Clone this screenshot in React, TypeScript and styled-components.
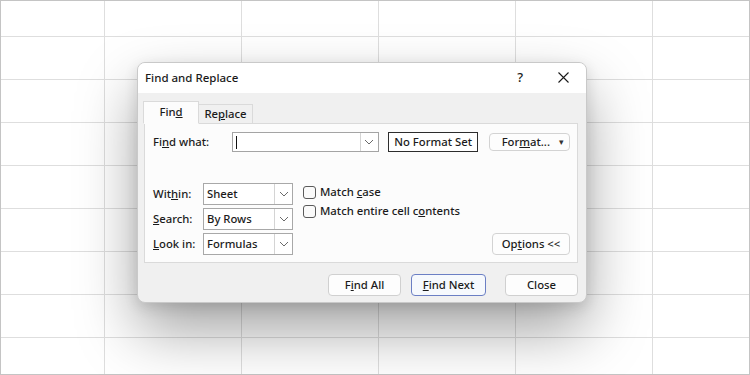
import React from 'react';
import styled, { createGlobalStyle } from 'styled-components';

const GlobalStyle = createGlobalStyle`
  html, body {
    margin: 0;
    padding: 0;
    width: 750px;
    height: 375px;
    overflow: hidden;
    background: #ffffff;
  }
  * {
    box-sizing: border-box;
  }
`;

const Chevron: React.FC = () => (
  <svg width="10" height="6" viewBox="0 0 10 6">
    <path d="M1 1 L5 5 L9 1" fill="none" stroke="#6a6a6a" strokeWidth="1" />
  </svg>
);

const CloseGlyph: React.FC = () => (
  <svg width="11" height="11" viewBox="0 0 11 11">
    <path d="M0.5 0.5 L10.5 10.5 M10.5 0.5 L0.5 10.5" stroke="#1a1a1a" strokeWidth="1.1" />
  </svg>
);

const SELECTS = [
  { label: <>Wit<u>h</u>in:</>, value: 'Sheet' },
  { label: <><u>S</u>earch:</>, value: 'By Rows' },
  { label: <><u>L</u>ook in:</>, value: 'Formulas' },
];

const CHECKS = [
  <>Match <u>c</u>ase</>,
  <>Match entire cell c<u>o</u>ntents</>,
];

const App: React.FC = () => {
  const cells = Array.from({ length: 9 * 6 });

  return (
    <Page>
      <GlobalStyle />
      <Sheet>
        {cells.map((_, i) => (
          <Cell key={i} />
        ))}
      </Sheet>

      <Dialog>
        <TitleBar>
          <Title>Find and Replace</Title>
          <TitleActions>
            <Help>?</Help>
            <CloseGlyph />
          </TitleActions>
        </TitleBar>

        <Body>
          <Tabs>
            <Tab $active>Fin<u>d</u></Tab>
            <Tab>Re<u>p</u>lace</Tab>
          </Tabs>

          <Panel>
            <FindRow>
              <FindLabel>Fi<u>n</u>d what:</FindLabel>
              <Combo>
                <ComboText>
                  <Caret />
                </ComboText>
                <ArrowBox>
                  <Chevron />
                </ArrowBox>
              </Combo>
              <FormatBox>No Format Set</FormatBox>
              <FormatButton>
                <span>For<u>m</u>at...</span>
                <Tri>▾</Tri>
              </FormatButton>
            </FindRow>

            <Options>
              <SelectCol>
                {SELECTS.map((s, i) => (
                  <SelectRow key={i}>
                    <SelectLabel>{s.label}</SelectLabel>
                    <Select>
                      <SelectValue>{s.value}</SelectValue>
                      <ArrowBox>
                        <Chevron />
                      </ArrowBox>
                    </Select>
                  </SelectRow>
                ))}
              </SelectCol>

              <CheckCol>
                {CHECKS.map((c, i) => (
                  <CheckRow key={i}>
                    <Box />
                    <CheckText>{c}</CheckText>
                  </CheckRow>
                ))}
              </CheckCol>

              <OptionsButton>
                Op<u>t</u>ions &lt;&lt;
              </OptionsButton>
            </Options>
          </Panel>

          <Footer>
            <Button>F<u>i</u>nd All</Button>
            <Button $primary><u>F</u>ind Next</Button>
            <Button $gap>Close</Button>
          </Footer>
        </Body>
      </Dialog>
    </Page>
  );
};

export default App;

const Page = styled.div`
  position: relative;
  width: 750px;
  height: 375px;
  overflow: hidden;
  font-family: "Noto Sans", "Open Sans", sans-serif;
  font-size: 11.3px;
  font-weight: 500;
  color: #1b1b1b;
`;

const Sheet = styled.div`
  width: 750px;
  height: 375px;
  display: grid;
  grid-template-columns: 104px repeat(4, 137px) 1fr;
  grid-template-rows: 36px repeat(7, 43px) 1fr;
  border: 1px solid #c4c4c4;
  background: #ffffff;
`;

const Cell = styled.div`
  border-right: 1px solid #dedede;
  border-bottom: 1px solid #dedede;
  &:nth-child(6n) {
    border-right: none;
  }
  &:nth-last-child(-n + 6) {
    border-bottom: none;
  }
`;

const Dialog = styled.div`
  position: absolute;
  left: 137px;
  top: 62px;
  width: 450px;
  height: 241px;
  border: 1px solid #c9c9c9;
  border-radius: 8px;
  overflow: hidden;
  background: #f0f0f0;
  display: flex;
  flex-direction: column;
  box-shadow: 0 28px 60px rgba(0, 0, 0, 0.36), 0 4px 14px rgba(0, 0, 0, 0.12);
`;

const TitleBar = styled.div`
  height: 30px;
  flex: none;
  background: #ffffff;
  display: flex;
  align-items: center;
  justify-content: space-between;
  padding: 0 17px 2px 7px;
`;

const Title = styled.div`
  font-size: 11.5px;
  color: #1a1a1a;
`;

const TitleActions = styled.div`
  display: flex;
  align-items: center;
  gap: 35px;
`;

const Help = styled.span`
  font-size: 13px;
  color: #1a1a1a;
`;

const Body = styled.div`
  flex: 1;
  display: flex;
  flex-direction: column;
  padding: 8px 8px 0 5px;
`;

const Tabs = styled.div`
  display: flex;
  align-items: flex-end;
  height: 23px;
  margin-bottom: -1px;
  position: relative;
  z-index: 1;
`;

const Tab = styled.div<{ $active?: boolean }>`
  height: ${(p) => (p.$active ? '23px' : '20px')};
  width: ${(p) => (p.$active ? '56px' : '54px')};
  display: flex;
  align-items: center;
  justify-content: center;
  padding-bottom: 2px;
  background: ${(p) => (p.$active ? '#fcfcfc' : '#f0f0f0')};
  border: 1px solid #dadada;
  border-bottom: ${(p) => (p.$active ? '1px solid #fcfcfc' : '1px solid #dadada')};
  border-left: ${(p) => (p.$active ? '1px solid #dadada' : 'none')};
`;

const Panel = styled.div`
  margin-left: 1px;
  height: 140px;
  background: #fcfcfc;
  border: 1px solid #dadada;
  padding: 8px 7px 7px 8px;
  display: flex;
  flex-direction: column;
  justify-content: space-between;
`;

const FindRow = styled.div`
  display: flex;
  align-items: center;
`;

const FindLabel = styled.div`
  width: 79px;
  padding-bottom: 2px;
`;

const Combo = styled.div`
  width: 148px;
  height: 20px;
  display: flex;
  border: 1px solid #a4a4a4;
  background: #ffffff;
`;

const ComboText = styled.div`
  flex: 1;
  display: flex;
  align-items: center;
  padding-left: 3px;
`;

const Caret = styled.div`
  width: 1px;
  height: 13px;
  background: #111111;
`;

const ArrowBox = styled.div`
  width: 18px;
  display: flex;
  align-items: center;
  justify-content: center;
  border-left: 1px solid #d4d4d4;
`;

const FormatBox = styled.div`
  margin-left: 9px;
  width: 91px;
  height: 20px;
  padding-bottom: 2px;
  border: 1px solid #2d2d2d;
  display: flex;
  align-items: center;
  justify-content: center;
  background: #ffffff;
`;

const FormatButton = styled.div`
  margin-left: 11px;
  width: 81px;
  height: 18px;
  border: 1px solid #d3d3d3;
  border-radius: 4px;
  background: #fdfdfd;
  display: flex;
  align-items: center;
  justify-content: flex-end;
  gap: 9px;
  padding: 0 5px 2px 0;
`;

const Tri = styled.span`
  font-size: 9px;
  color: #333;
`;

const Options = styled.div`
  display: flex;
  align-items: flex-start;
`;

const SelectCol = styled.div`
  display: flex;
  flex-direction: column;
  gap: 3px;
`;

const SelectRow = styled.div`
  display: flex;
  align-items: center;
`;

const SelectLabel = styled.div`
  width: 50px;
  padding-bottom: 2px;
`;

const Select = styled.div`
  width: 90px;
  height: 22px;
  display: flex;
  border: 1px solid #a8a8a8;
  background: #ffffff;
`;

const SelectValue = styled.div`
  flex: 1;
  display: flex;
  align-items: center;
  padding: 0 0 2px 3px;
`;

const CheckCol = styled.div`
  margin-left: 10px;
  margin-top: 2px;
  display: flex;
  flex-direction: column;
  gap: 5px;
`;

const CheckRow = styled.div`
  display: flex;
  align-items: center;
  gap: 4px;
  height: 14px;
`;

const CheckText = styled.span`
  margin-top: -2px;
`;

const Box = styled.div`
  width: 13px;
  height: 13px;
  border: 1px solid #5a5a5a;
  border-radius: 3px;
  background: #fafafa;
`;

const OptionsButton = styled.div`
  margin-left: auto;
  align-self: flex-end;
  width: 78px;
  height: 22px;
  padding-bottom: 2px;
  border: 1px solid #d3d3d3;
  border-radius: 4px;
  background: #fdfdfd;
  display: flex;
  align-items: center;
  justify-content: center;
`;

const Footer = styled.div`
  display: flex;
  justify-content: flex-end;
  gap: 10px;
  margin-top: 11px;
`;

const Button = styled.div<{ $primary?: boolean; $gap?: boolean }>`
  width: ${(p) => (p.$primary ? '75px' : '73px')};
  height: 22px;
  padding-bottom: 2px;
  margin-left: ${(p) => (p.$gap ? '9px' : '0')};
  border: 1px solid ${(p) => (p.$primary ? '#6b7fc4' : '#d0d0d0')};
  border-radius: 4px;
  background: ${(p) => (p.$primary ? '#f6f9fd' : '#fdfdfd')};
  display: flex;
  align-items: center;
  justify-content: center;
`;
